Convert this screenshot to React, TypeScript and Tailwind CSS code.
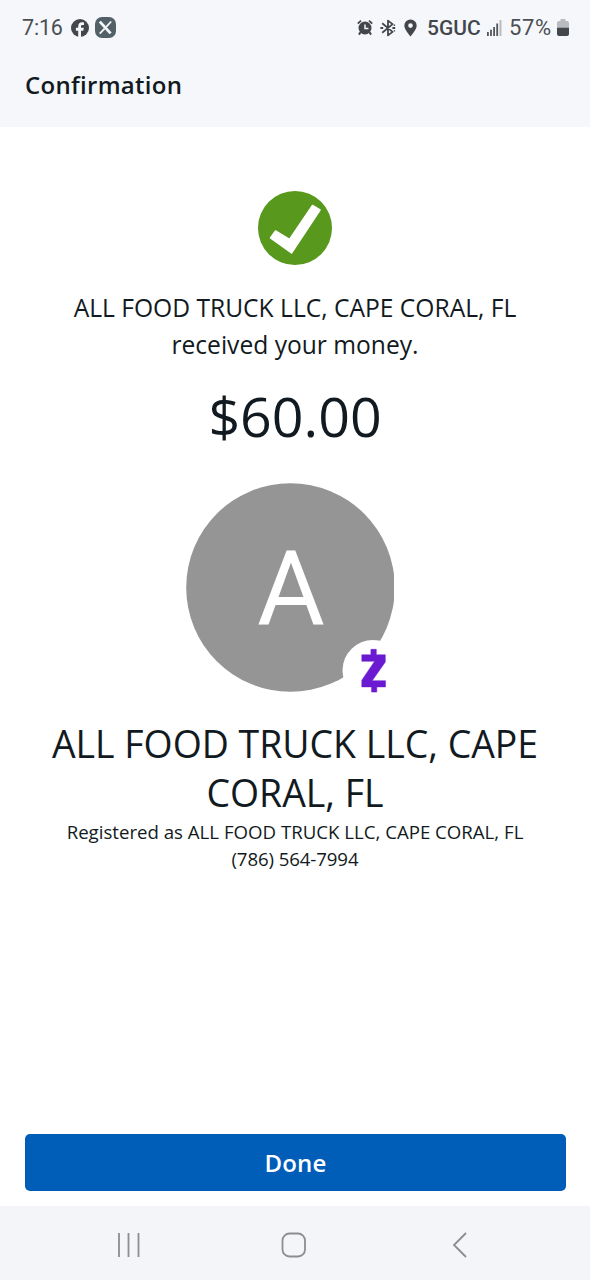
import React from 'react';

const AlarmIcon: React.FC = () => (
  <svg className="w-4 h-[17px]" viewBox="0 0 16 17" fill="none">
    <circle cx="8" cy="9" r="6.5" fill="#43464b" />
    <path d="M3.6 13.2 1.9 15.6M12.4 13.2l1.7 2.4" stroke="#43464b" strokeWidth="2" />
    <path d="M.8 4.6 4 1.6M15.2 4.6 12 1.6" stroke="#43464b" strokeWidth="1.8" />
    <path d="M8 5.4V9.6h3.4" stroke="#f5f7fb" strokeWidth="1.5" />
  </svg>
);

const BluetoothIcon: React.FC = () => (
  <svg className="w-4 h-[18px]" viewBox="0 0 16 18" fill="none" stroke="#43464b" strokeWidth="1.8">
    <path d="m2.2 4.2 10.4 8.7L8 16.4V1.6l4.6 3.5-10.4 8.7" strokeLinejoin="round" />
    <path d="M.4 9h2.8M12.4 9h2.8" strokeWidth="2" />
    <path d="M14.4 5.6v1.4M14.4 11.2v1.4" strokeWidth="1.4" />
  </svg>
);

const PinIcon: React.FC = () => (
  <svg className="w-[13px] h-[18px]" viewBox="0 0 13 18">
    <path
      d="M6.5.6A6.1 6.1 0 0 0 .3 6.7C.3 10.6 6.5 17.4 6.5 17.4s6.2-6.8 6.2-10.7A6.1 6.1 0 0 0 6.5.6Zm0 3.7a2.3 2.3 0 1 1 0 4.6 2.3 2.3 0 0 1 0-4.6Z"
      fill="#43464b"
      fillRule="evenodd"
    />
  </svg>
);

const SignalIcon: React.FC = () => (
  <svg className="w-[15px] h-4" viewBox="0 0 15 16">
    <path d="M0 12h1.8v4H0zM3.1 9.8h1.8V16H3.1zM6.2 7H8v9H6.2zM9.3 3.4h1.8V16H9.3z" fill="#54575b" />
    <path d="M12.5 0h2v16h-2z" fill="#b9bbbf" />
  </svg>
);

const BatteryIcon: React.FC = () => (
  <svg className="w-3 h-[18px]" viewBox="0 0 12 18">
    <path d="M3.5 0h5v2H10a2 2 0 0 1 2 2v5H0V4a2 2 0 0 1 2-2h1.5z" fill="#b9bbbf" />
    <path d="M0 8.8h12V15a2 2 0 0 1-2 2H2a2 2 0 0 1-2-2z" fill="#43464b" />
  </svg>
);

const StatusBar: React.FC = () => (
  <div className="flex h-[55px] items-center justify-between pl-[22px] pr-[21px] font-[Roboto,sans-serif] text-[#4c4f53]">
    <div className="flex items-center">
      <span className="w-[49px] text-[21.5px] leading-6 tracking-[-0.2px]">7:16</span>
      <svg className="w-[18px] h-[18px]" viewBox="0 0 18 18">
        <circle cx="9" cy="9" r="9" fill="#43464b" />
        <path d="M7.2 18v-6.3H4.9V8.8h2.3V7.2c0-2.6 1.6-4 3.8-4 .9 0 1.7.1 2 .2v2.5h-1.4c-1.2 0-1.6.6-1.6 1.4v1.5h2.8l-.5 2.9H10V18z" fill="#f5f7fb" />
      </svg>
      <svg className="ml-1.5 w-[21px] h-[21px]" viewBox="0 0 21 21" fill="none">
        <rect width="21" height="21" rx="7" fill="#526168" />
        <path d="M4.8 4.6 15.6 16.4" stroke="#f5f7fb" strokeWidth="2.8" />
        <path d="M16.2 4.5l-5 5.4M9.6 11.6l-4.9 5" stroke="#f5f7fb" strokeWidth="1.8" />
      </svg>
    </div>
    <div className="flex items-center">
      <AlarmIcon />
      <span className="ml-[7px] flex"><BluetoothIcon /></span>
      <span className="ml-2 flex"><PinIcon /></span>
      <span className="ml-2.5 w-[60px] text-[21px] leading-6 font-medium text-[#43464b]">5GUC</span>
      <SignalIcon />
      <span className="ml-[7px] w-[48px] text-[22px] leading-6 tracking-[0.6px]">57%</span>
      <BatteryIcon />
    </div>
  </div>
);

const Avatar: React.FC = () => (
  <div className="relative mt-[31px] mr-[10px] flex h-[208px] w-[208px] shrink-0 items-center justify-center">
    <svg className="absolute inset-0 h-[212px] w-[208px]" viewBox="0 0 208 212">
      <circle cx="104.5" cy="104.5" r="104.3" fill="#959595" />
      <circle cx="187" cy="187.5" r="30.5" fill="#fff" />
      <path
        d="M184.9 166.3h5.4v5.5h9v7.2L186.2 197.7h13.3v6.2h-8.7v5.2h-5.2v-5.2h-9.8v-6.7L188.6 178.3H175.8v-6.5h9.1z"
        fill="#6a1bd1"
        stroke="#6a1bd1"
        strokeWidth="0.5"
        strokeLinejoin="round"
      />
    </svg>
    <span className="relative mt-1 ml-[2px] font-[Roboto,sans-serif] text-[104px] leading-none text-white">A</span>
  </div>
);

const App: React.FC = () => {
  return (
    <div className="flex h-[1280px] w-[590px] flex-col overflow-hidden bg-white font-['Open_Sans',sans-serif] text-[#121a21]">
      {/* Header */}
      <header className="h-[127px] shrink-0 bg-[#f5f7fb]">
        <StatusBar />
        <h1 className="pl-[25px] text-[24px] leading-[60px] font-semibold tracking-[0.3px]">Confirmation</h1>
      </header>

      {/* Payment details */}
      <main className="flex flex-1 flex-col items-center pt-16 text-center">
        <svg className="h-[74px] w-[74px] shrink-0" viewBox="0 0 74 74">
          <circle cx="37" cy="37" r="37" fill="#58981c" />
          <path
            d="M12.5 47 17.5 40 31.5 48.5 54.5 14.5 62 19 33.5 62z"
            fill="#fff"
            stroke="#fff"
            strokeWidth="1.5"
            strokeLinejoin="round"
          />
        </svg>

        <p className="mt-6 text-[24.6px] leading-[37px] whitespace-nowrap">
          ALL FOOD TRUCK LLC, CAPE CORAL, FL
          <br />
          received your money.
        </p>
        <p className="mt-[17px] text-[55.5px] leading-[72px]">$60.00</p>

        <Avatar />

        <h2 className="mt-7 text-[37.4px] leading-[49px] whitespace-nowrap">
          ALL FOOD TRUCK LLC, CAPE
          <br />
          CORAL, FL
        </h2>
        <p className="mt-px text-[18.65px] leading-[27px] whitespace-nowrap">
          Registered as ALL FOOD TRUCK LLC, CAPE CORAL, FL
          <br />
          <span className="tracking-[-0.1px]">(786) 564-7994</span>
        </p>
      </main>

      <div className="pr-6 pb-[15px] pl-[25px]">
        <button className="h-[57px] w-full rounded-[5px] bg-[#005eb8] text-[24px] font-semibold tracking-[0.2px] text-white">Done</button>
      </div>

      {/* System navigation */}
      <nav className="flex h-[74px] shrink-0 items-center bg-[#f4f5f9] pt-[3px] pl-[117px]">
        <svg className="h-[26px] w-[23px]" viewBox="0 0 23 26" stroke="#8b8d90" strokeWidth="1.8">
          <path d="M2 1v24M11.5 1v24M21.5 1v24" />
        </svg>
        <svg className="ml-[141px] h-[26px] w-[26px]" viewBox="0 0 26 26" fill="none" stroke="#8b8d90" strokeWidth="1.8">
          <rect x="1.5" y="1.5" width="22.5" height="23" rx="7" />
        </svg>
        <svg className="ml-[145px] h-[26px] w-[15px]" viewBox="0 0 15 26" fill="none" stroke="#8b8d90" strokeWidth="1.8">
          <path d="M14 1 2 13l12 12" />
        </svg>
      </nav>
    </div>
  );
};

export default App;
